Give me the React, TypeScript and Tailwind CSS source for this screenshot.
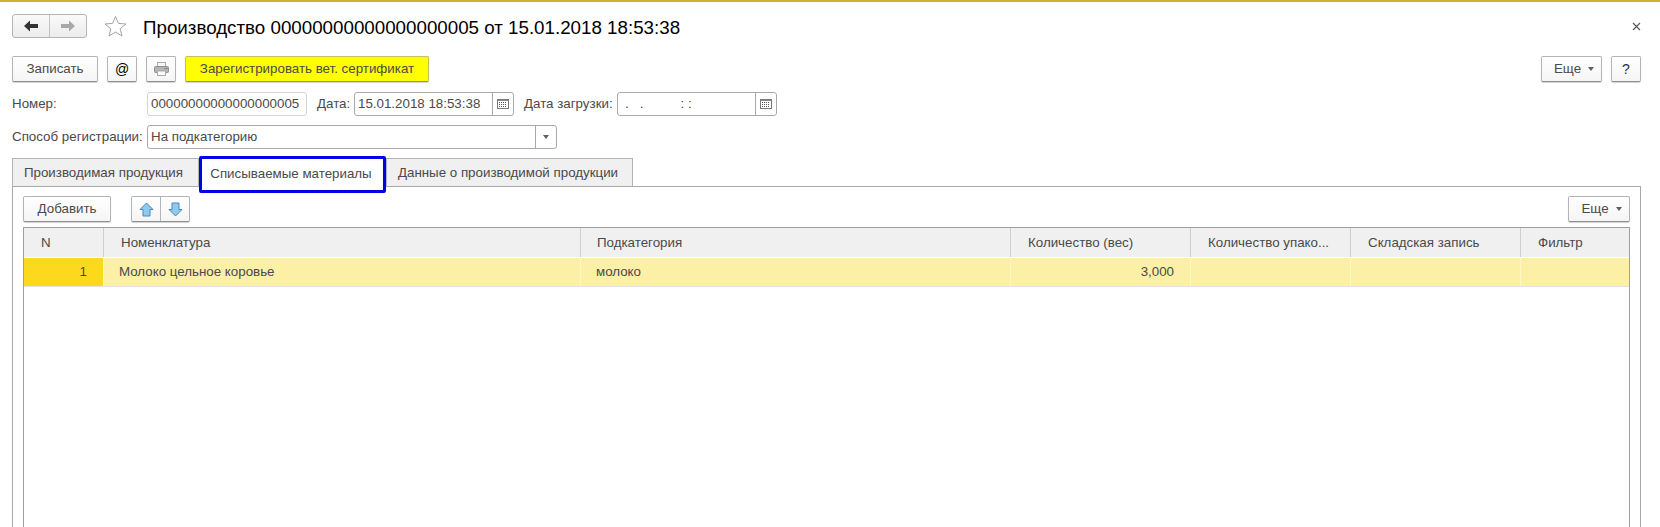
import type { ReactNode } from 'react';

const btn =
  'flex items-center justify-center h-[26px] rounded-[2px] border border-[#b4b4b4] border-b-[#8f8f8f] bg-gradient-to-b from-white to-[#f5f5f5] shadow-[0_1px_1px_rgba(0,0,0,0.18)] text-[13.33px] text-[#4a4a4a]';

const CalendarIcon = () => (
  <svg width="12" height="10" viewBox="0 0 12 10">
    <rect x="0.5" y="0.5" width="11" height="9" fill="#fff" stroke="#777" />
    <rect x="1" y="1" width="10" height="1" fill="#8a8a8a" />
    <path d="M2 3.5h8M2 5.500h8M2 7.500h8" stroke="#555" strokeDasharray="1 1" />
  </svg>
);

const Caret = () => (
  <svg width="6" height="4" viewBox="0 0 6 4">
    <path d="M0 0h6L3 4z" fill="#5f5f5f" />
  </svg>
);

const Field = ({ width, children, button }: { width: string; children?: ReactNode; button?: ReactNode }) => (
  <div className={`flex h-[24px] rounded-[3px] border border-[#a9a9a9] bg-white text-[13.33px] text-[#4a4a4a] ${width}`}>
    <div className="flex-1 flex items-center pl-[3px] whitespace-nowrap overflow-hidden">{children}</div>
    {button && <div className="w-[21px] flex items-center justify-center border-l border-[#a9a9a9]">{button}</div>}
  </div>
);

const columns = [
  { title: 'N', width: 'w-[80px]', pad: 'pl-[17px]' },
  { title: 'Номенклатура', width: 'w-[477px]', pad: 'pl-[17px]' },
  { title: 'Подкатегория', width: 'w-[430px]', pad: 'pl-[16px]' },
  { title: 'Количество (вес)', width: 'w-[180px]', pad: 'pl-[17px]' },
  { title: 'Количество упако...', width: 'w-[160px]', pad: 'pl-[17px]' },
  { title: 'Складская запись', width: 'w-[170px]', pad: 'pl-[17px]' },
  { title: 'Фильтр', width: 'flex-1', pad: 'pl-[17px]' },
];

export default function App() {
  return (
    <div className="w-[1660px] h-[527px] overflow-hidden bg-white flex flex-col font-['Liberation_Sans',Arial,sans-serif] text-[13.33px] text-[#4a4a4a]">
      <div className="h-[2px] bg-[#cdb232]" />

      {/* Title row */}
      <div className="flex items-center h-[24px] mt-[12px] pl-[12px] pr-[19px]">
        <div className="flex w-[75px] h-[24px] rounded-[3px] border border-[#b4b4b4] bg-gradient-to-b from-[#fafafa] to-[#ececec]">
          <div className="w-[37px] flex items-center justify-center border-r border-[#c4c4c4]">
            <svg width="14" height="12" viewBox="0 0 14 12">
              <path d="M0 6 6 0.5V4h8v4H6v3.5z" fill="#333" />
            </svg>
          </div>
          <div className="flex-1 flex items-center justify-center">
            <svg width="14" height="12" viewBox="0 0 14 12">
              <path d="M14 6 8 0.5V4H0v4h8v3.5z" fill="#a8a8a8" />
            </svg>
          </div>
        </div>
        <svg className="ml-[17px]" width="23" height="22" viewBox="0 0 23 22">
          <path d="M11.5 1.5l2.9 6.9 7.6.6-5.8 4.8 1.800 7.200-6.500-3.900-6.500 3.900 1.800-7.200L1 9l7.600-.6z" fill="#fff" stroke="#a3a3a3" />
        </svg>
        <div className="ml-[16px] pt-[4px] text-[18.75px] text-black whitespace-nowrap">
          Производство 00000000000000000005 от 15.01.2018 18:53:38
        </div>
        <svg className="ml-auto" width="9" height="9" viewBox="0 0 9 9">
          <path d="M1 1l7 7M8 1L1 8" stroke="#555" strokeWidth="1.1" />
        </svg>
      </div>

      {/* Command bar */}
      <div className="flex items-center mt-[18px] px-[12px] pr-[19px]">
        <button className={`${btn} w-[86px]`}>Записать</button>
        <button className={`${btn} w-[30px] ml-[9px] !text-[14px] !text-black`}>@</button>
        <button className={`${btn} w-[30px] ml-[9px]`}>
          <svg width="15" height="14" viewBox="0 0 15 14">
            <rect x="3.500" y="0.500" width="8" height="4" fill="#f5f5f5" stroke="#aaa" />
            <rect x="0.500" y="4.500" width="14" height="6" rx="1" fill="#b4b4b4" stroke="#8f8f8f" />
            <rect x="10" y="6" width="1.500" height="1" fill="#4caf50" />
            <rect x="12" y="6" width="1.500" height="1" fill="#d9534f" />
            <rect x="3.500" y="9" width="8" height="4.500" fill="#fff" stroke="#aaa" />
          </svg>
        </button>
        <button className={`${btn} w-[244px] ml-[9px] !bg-none bg-[#ffff00] border-[#c2c25a] border-b-[#9a9a55]`}>
          Зарегистрировать вет. сертификат
        </button>
        <button className={`${btn} w-[61px] ml-auto gap-[7px] pl-[5px]`}>
          Еще <Caret />
        </button>
        <button className={`${btn} w-[30px] ml-[9px] !text-[14px] !text-[#333]`}>?</button>
      </div>

      {/* Fields */}
      <div className="flex items-center mt-[10px] pl-[12px]">
        <div className="w-[135px]">Номер:</div>
        <Field width="w-[160px] !border-[#d4d4d4]">00000000000000000005</Field>
        <div className="ml-[10px] w-[37px]">Дата:</div>
        <Field width="w-[160px]" button={<CalendarIcon />}>15.01.2018 18:53:38</Field>
        <div className="ml-[10px] w-[93px] whitespace-nowrap">Дата загрузки:</div>
        <Field width="w-[160px]" button={<CalendarIcon />}>
          <span className="pl-[4px] whitespace-pre">{'.   .          : :'}</span>
        </Field>
      </div>
      <div className="flex items-center mt-[9px] pl-[12px]">
        <div className="w-[135px] whitespace-nowrap">Способ регистрации:</div>
        <Field width="w-[410px]" button={<Caret />}>На подкатегорию</Field>
      </div>

      {/* Tabs */}
      <div className="flex items-start h-[30px] mt-[7px] pl-[12px]">
        <div className="w-[187px] h-[28px] mt-[2px] pr-[4px] flex items-center justify-center border border-b-0 border-[#b4b4b4] bg-[#f0f0f0]">
          Производимая продукция
        </div>
        <div className="relative z-10 w-[187px] h-[37px] pb-[2px] pr-[3px] flex items-center justify-center border-[3px] border-[#0000e6] rounded-[2px] bg-white">
          Списываемые материалы
        </div>
        <div className="w-[247px] h-[28px] mt-[2px] pr-[3px] flex items-center justify-center border border-b-0 border-[#b4b4b4] bg-[#f0f0f0]">
          Данные о производимой продукции
        </div>
      </div>

      {/* Panel */}
      <div className="flex-1 ml-[12px] mr-[19px] border border-b-0 border-[#a9a9a9] px-[10px] pt-[9px] flex flex-col">
        <div className="flex items-center">
          <button className={`${btn} w-[88px]`}>Добавить</button>
          <div className={`${btn} w-[59px] ml-[20px] !justify-start`}>
            <div className="w-[29px] h-full flex items-center justify-center border-r border-[#b4b4b4]">
              <svg width="15" height="15" viewBox="0 0 15 15">
                <path d="M7.5 1 14 7.500h-3V14H4V7.500H1z" fill="#8fc9ec" stroke="#4a88b8" />
              </svg>
            </div>
            <div className="flex-1 flex items-center justify-center">
              <svg width="15" height="15" viewBox="0 0 15 15">
                <path d="M7.5 14 14 7.500h-3V1H4v6.500H1z" fill="#8fc9ec" stroke="#4a88b8" />
              </svg>
            </div>
          </div>
          <button className={`${btn} w-[62px] ml-auto gap-[7px] pl-[5px]`}>
            Еще <Caret />
          </button>
        </div>

        <div className="flex-1 mt-[5px] border border-b-0 border-[#a0a0a0] flex flex-col">
          <div className="flex h-[29px] bg-[#f0f0f0]">
            {columns.map((c, i) => (
              <div
                key={c.title}
                className={`${c.width} ${c.pad} flex items-center whitespace-nowrap ${i < columns.length - 1 ? 'border-r border-[#cfcfcf]' : ''}`}
              >
                {c.title}
              </div>
            ))}
          </div>
          <div className="flex h-[28px] mt-[1px] bg-[#fbf0a6]">
            <div className="w-[80px] bg-[#fdd91e] flex items-center justify-end pr-[16px] border-r border-[#fff6c8]">1</div>
            <div className="w-[477px] pl-[15px] flex items-center border-r border-[#fff6c8]">Молоко цельное коровье</div>
            <div className="w-[430px] pl-[15px] flex items-center border-r border-[#fff6c8]">молоко</div>
            <div className="w-[180px] pr-[16px] flex items-center justify-end border-r border-[#fff6c8]">3,000</div>
            <div className="w-[160px] border-r border-[#fff6c8]" />
            <div className="w-[170px] border-r border-[#fff6c8]" />
            <div className="flex-1" />
          </div>
          <div className="h-[1px] bg-[#e2e2e2]" />
        </div>
      </div>
    </div>
  );
}
